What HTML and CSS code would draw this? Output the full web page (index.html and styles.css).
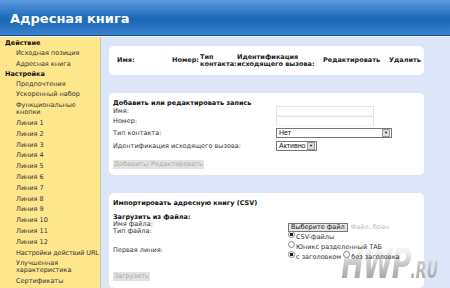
FILE: index.html
```html
<!DOCTYPE html>
<html lang="ru">
<head>
    <meta charset="UTF-8">
    <title>Адресная книга</title>
    <link rel="stylesheet" href="styles.css">
</head>
<body>
    <div class="header">
        <h1>Адресная книга</h1>
    </div>
    <div class="layout">
        <div class="sidebar">
            <div class="group">Действие</div>
            <a href="#">Исходная позиция</a>
            <a href="#">Адресная книга</a>
            <div class="group">Настройка</div>
            <a href="#">Предпочтения</a>
            <a href="#">Ускоренный набор</a>
            <a href="#">Функциональные кнопки</a>
            <a href="#">Линия 1</a>
            <a href="#">Линия 2</a>
            <a href="#">Линия 3</a>
            <a href="#">Линия 4</a>
            <a href="#">Линия 5</a>
            <a href="#">Линия 6</a>
            <a href="#">Линия 7</a>
            <a href="#">Линия 8</a>
            <a href="#">Линия 9</a>
            <a href="#">Линия 10</a>
            <a href="#">Линия 11</a>
            <a href="#">Линия 12</a>
            <a href="#" class="one-line">Настройки действий URL</a>
            <a href="#">Улучшенная характеристика</a>
            <a href="#">Сертификаты</a>
        </div>
        <div class="main">
            <div class="card list">
                <div class="list-head">
                    <span>Имя:</span>
                    <span>Номер:</span>
                    <span>Тип контакта:</span>
                    <span>Идентификация исходящего вызова:</span>
                    <span>Редактировать</span>
                    <span>Удалить</span>
                </div>
            </div>

            <div class="card edit">
                <div class="title">Добавить или редактировать запись</div>
                <div class="form">
                    <span>Имя:</span>
                    <input class="text" type="text">
                    <span>Номер:</span>
                    <input class="text" type="text">
                    <span>Тип контакта:</span>
                    <div class="select wide"><span>Нет</span><b>&#9660;</b></div>
                    <span>Идентификация исходящего вызова:</span>
                    <div class="select small"><span>Активно</span><b>&#9660;</b></div>
                </div>
                <button class="btn-off">Добавить/ Редактировать</button>
            </div>

            <div class="card import">
                <div class="mark">HWP<small>.RU</small></div>
                <div class="title">Импортировать адресную книгу (CSV)</div>
                <div class="upload">
                    <div class="labels">
                        <div class="subtitle">Загрузить из файла:</div>
                        <div>Имя файла:</div>
                        <div>Тип файла:</div>
                        <div class="first-line">Первая линия:</div>
                    </div>
                    <div class="controls">
                        <div class="file"><span class="file-btn">Выберите файл</span><span class="file-none">Файл..бран</span></div>
                        <label><i class="radio on"></i>CSV-файлы</label>
                        <label><i class="radio"></i>Юникс разделенный ТАБ</label>
                        <div>
                            <label class="inline"><i class="radio on"></i>с заголовком</label>
                            <label class="inline"><i class="radio"></i>без заголовка</label>
                        </div>
                    </div>
                </div>
                <button class="btn-off upload-btn">Загрузить</button>
            </div>
        </div>
    </div>
</body>
</html>
```

FILE: styles.css
```css
body {
    margin: 0;
    font-family: "DejaVu Sans", Verdana, sans-serif;
    font-size: 6.5px;
    color: #222;
    background-color: #dde5f8;
    width: 450px;
    height: 288px;
    overflow: hidden;
}
.header {
    height: 35px;
    background: linear-gradient(#5c9be0, #2a74c2 40%, #1a66b3 55%, #3b82d0 100%);
    border-bottom: 1px solid #17508f;
    box-shadow: 0 1px 0 #eef3fc;
}
.header h1 {
    margin: 0;
    padding: 11px 0 0 10px;
    font-family: "DejaVu Sans", Verdana, sans-serif;
    font-size: 13px;
    line-height: 15px;
    font-weight: bold;
    color: #fff;
}
.layout {
    display: flex;
    margin-top: 1px;
    height: 252px;
}
.sidebar {
    flex-shrink: 0;
    width: 100px;
    background-color: #fde68c;
    border-right: 1px solid #c9c4a8;
    padding-top: 2px;
    overflow: hidden;
}
.sidebar .group {
    font-weight: bold;
    color: #111;
    padding-left: 5px;
    line-height: 9px;
}
.sidebar a {
    display: block;
    padding: 2px 4px 1.8px 16px;
    line-height: 7px;
    color: #333;
    text-decoration: none;
}
.sidebar .one-line {
    white-space: nowrap;
    letter-spacing: -0.15px;
}
.main {
    flex: 1;
    min-width: 0;
    padding: 9px 26px 0 8px;
}
.card {
    position: relative;
    background-color: #fff;
    border-radius: 5px;
    padding: 6px 4px 6px 4px;
}
.list {
    padding: 5px 4px 5px 8px;
    height: 19px;
}
.list-head {
    display: grid;
    grid-template-columns: 55px 28px 37px 86px 66px auto;
    align-items: center;
    font-weight: bold;
    line-height: 7px;
    color: #222;
    height: 19px;
}
.edit {
    margin-top: 18px;
}
.title {
    position: relative;
    font-weight: bold;
    color: #111;
    line-height: 8px;
}
.form {
    display: grid;
    grid-template-columns: 163px auto;
    grid-template-rows: 10px 10px 12px 13px;
    align-items: end;
    margin-top: -1px;
    color: #333;
    line-height: 10px;
}
.text {
    box-sizing: border-box;
    width: 98px;
    height: 10px;
    border: 1px solid #e3e3e3;
    border-bottom-color: #f3f3f3;
    padding: 0;
    margin: 0;
}
.select {
    box-sizing: border-box;
    display: flex;
    align-items: center;
    justify-content: space-between;
    height: 10px;
    border: 1px solid #777;
    font-family: "Liberation Sans", Arial, sans-serif;
    font-size: 7px;
    line-height: 8px;
    color: #111;
    padding-left: 2px;
}
.select b {
    width: 6px;
    height: 6px;
    background-color: #ddd;
    border: 1px solid #999;
    font-size: 4px;
    line-height: 6px;
    text-align: center;
    font-weight: normal;
    margin-right: 1px;
}
.select.wide {
    width: 116px;
}
.select.small {
    width: 41px;
}
.btn-off {
    position: relative;
    display: block;
    margin-top: 9px;
    padding: 1px;
    border: none;
    background-color: #e2e2e2;
    color: #aaa;
    font-family: "DejaVu Sans", Verdana, sans-serif;
    font-size: 6.5px;
    line-height: 7px;
}
.import {
    margin-top: 18px;
    padding-bottom: 7px;
}
.upload {
    position: relative;
    display: flex;
    margin-top: 7px;
    color: #333;
    line-height: 7px;
}
.labels {
    width: 175px;
}
.subtitle {
    font-weight: bold;
    color: #111;
}
.first-line {
    margin-top: 12px;
}
.controls {
    padding-top: 9px;
    line-height: 8px;
}
.controls label {
    display: block;
}
.controls label.inline {
    display: inline;
}
.file {
    display: flex;
    align-items: center;
    height: 8px;
}
.file-btn {
    background-color: #e6e6e6;
    border: 1px solid #777;
    padding: 0 2px;
    color: #111;
    line-height: 7px;
}
.file-none {
    color: #bbb;
    margin-left: 3px;
}
.radio {
    display: inline-block;
    width: 5px;
    height: 5px;
    border: 1px solid #888;
    border-radius: 50%;
    margin-right: 1px;
    vertical-align: 1px;
    background-color: #fff;
}
.radio.on {
    background: radial-gradient(#222 40%, #fff 50%);
}
.upload-btn {
    margin-top: 11px;
}
.mark {
    position: absolute;
    right: -14px;
    bottom: 2px;
    font-family: "DejaVu Sans", sans-serif;
    font-size: 27px;
    line-height: 20px;
    font-weight: bold;
    font-style: italic;
    letter-spacing: -1px;
    color: transparent;
    background: linear-gradient(#f2f2f2 10%, #c4c4c4 45%, #9a9a9a 100%);
    -webkit-background-clip: text;
    background-clip: text;
    transform: scaleY(1.6);
    transform-origin: bottom right;
}
.mark small {
    font-size: 14px;
    letter-spacing: 0;
}
```
